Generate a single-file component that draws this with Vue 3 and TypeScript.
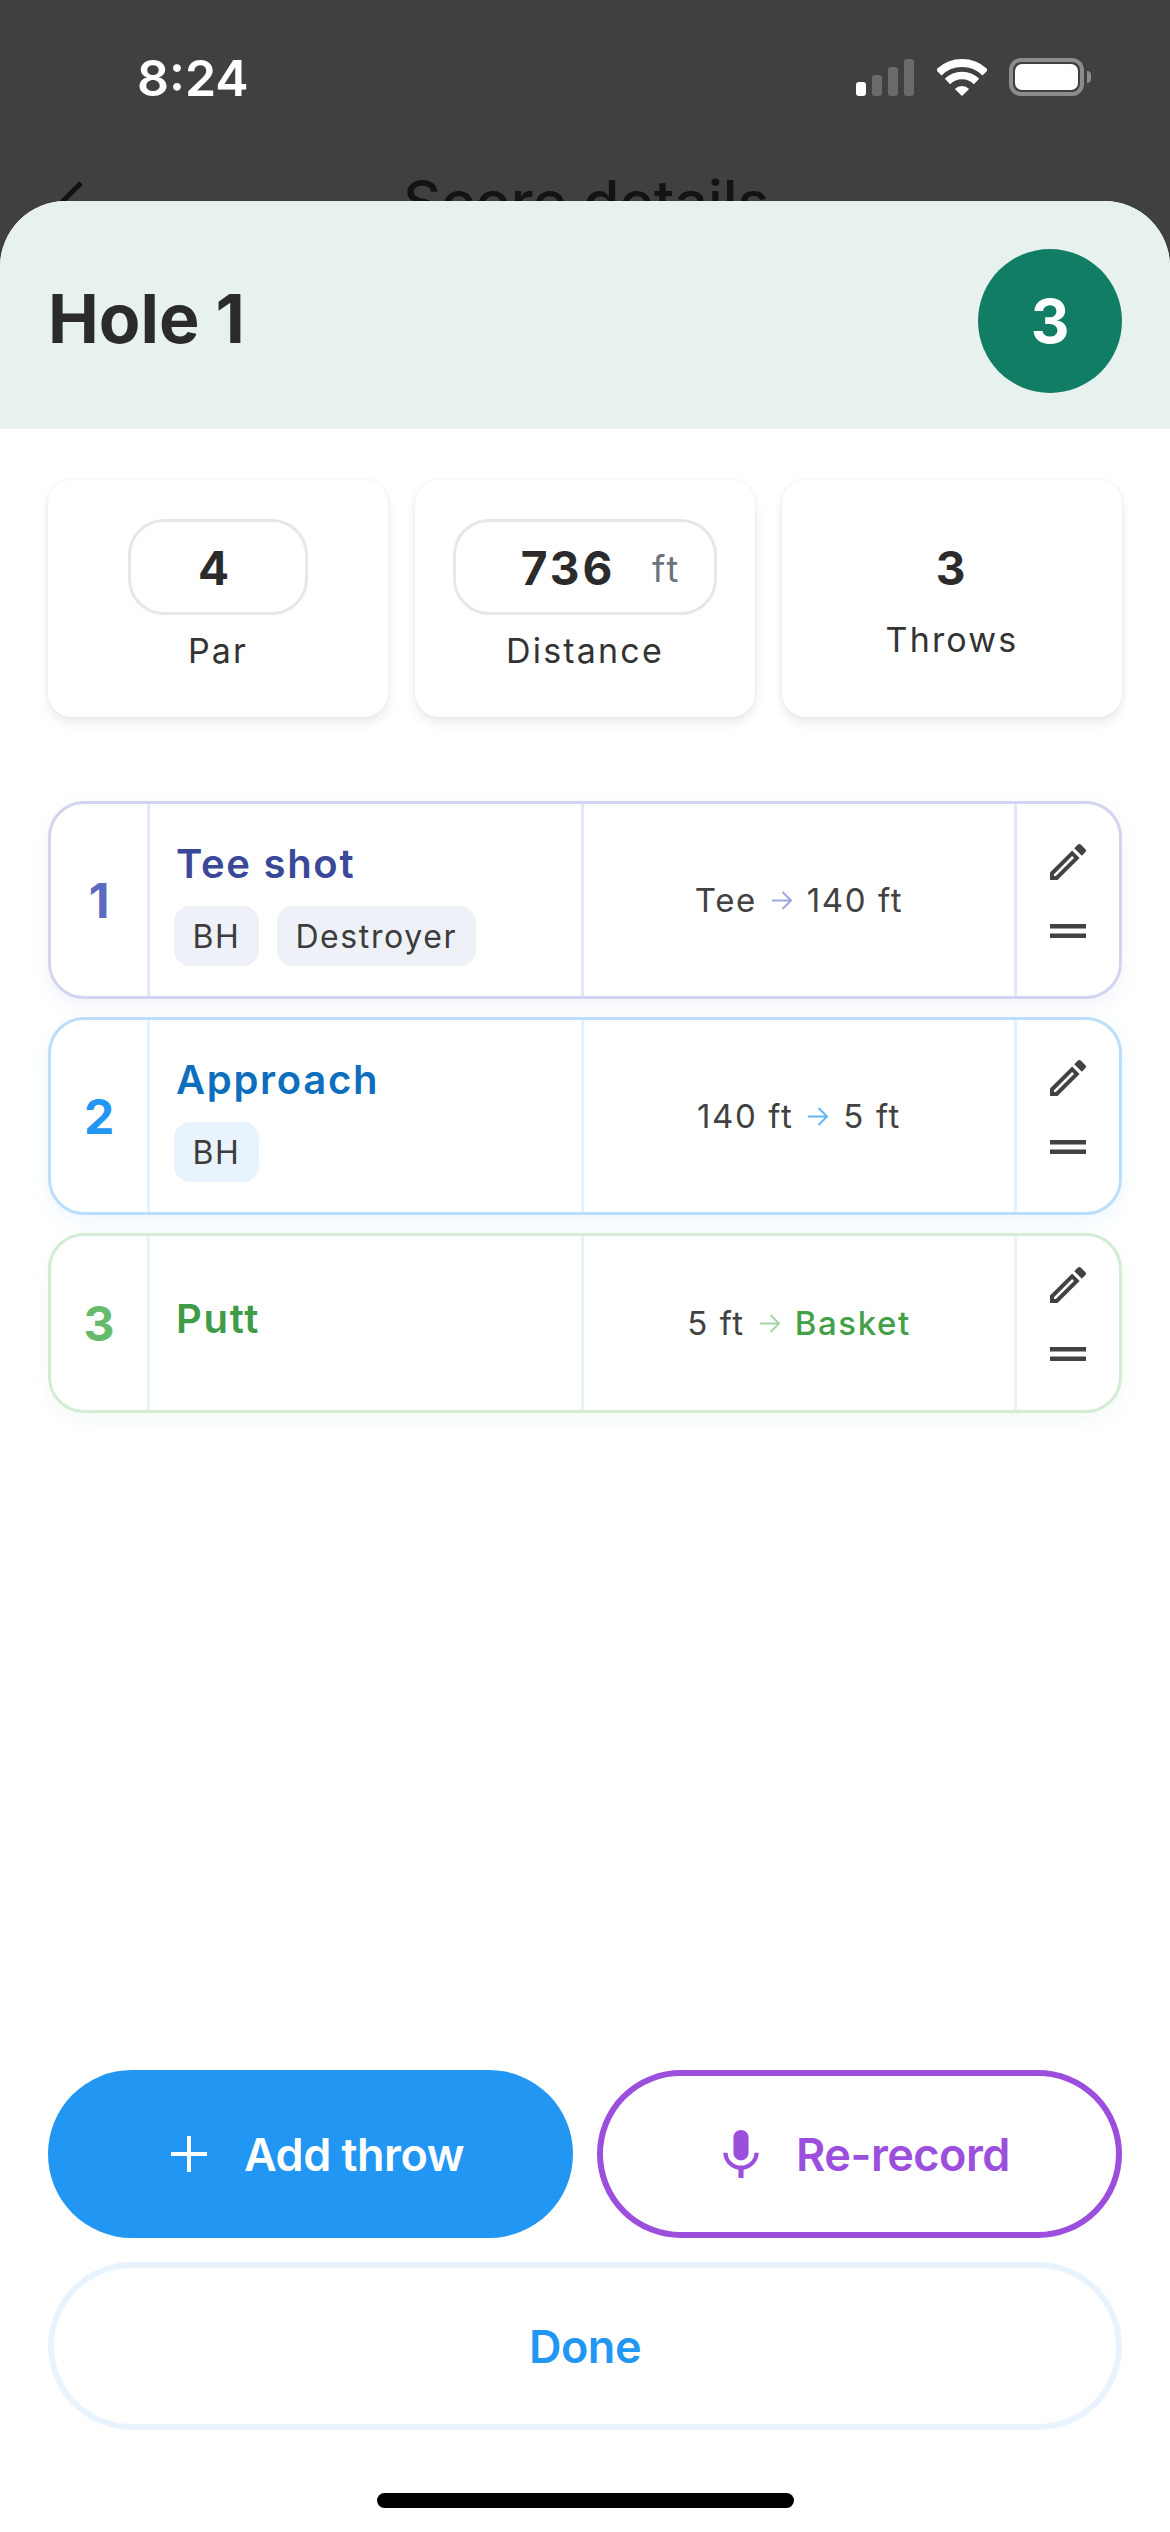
<template>
  <div class="phone">
    <div class="status">
      <span class="time">8:24</span>
      <div class="status-icons">
        <div class="signal">
          <i class="bar on b1"></i>
          <i class="bar b2"></i>
          <i class="bar b3"></i>
          <i class="bar b4"></i>
        </div>
        <svg class="wifi" width="50" height="37" viewBox="0 0 50 37">
          <path d="M1.7 13.7A33 33 0 0 1 48.3 13.7" fill="none" stroke="#fff" stroke-width="8" />
          <path d="M10.5 22.5A20.5 20.5 0 0 1 39.5 22.5" fill="none" stroke="#fff" stroke-width="7.5" />
          <path d="M25 37L17.9 29.9A10 10 0 0 1 32.1 29.9Z" fill="#fff" />
        </svg>
        <div class="battery"><div class="charge"></div></div>
        <div class="nub"></div>
      </div>
    </div>

    <div class="nav">
      <svg class="back" width="30" height="48" viewBox="0 0 30 48">
        <path d="M26 3L5 24L26 45" fill="none" stroke="#111" stroke-width="5" />
      </svg>
      <span class="nav-title">Score details</span>
    </div>

    <div class="sheet">
      <div class="sheet-head">
        <div class="hole">Hole 1</div>
        <div class="score">3</div>
      </div>

      <div class="stats">
        <div class="stat">
          <div class="pill">
            <span class="value par">4</span>
          </div>
          <div class="label">Par</div>
        </div>
        <div class="stat">
          <div class="pill wide">
            <span class="value dist">736</span>
            <span class="unit">ft</span>
          </div>
          <div class="label">Distance</div>
        </div>
        <div class="stat plain">
          <div class="value">3</div>
          <div class="label near">Throws</div>
        </div>
      </div>

      <div class="throws">
        <div v-for="t in throwsList" :key="t.num" class="throw" :class="t.kind">
          <div class="num">{{ t.num }}</div>
          <div class="main" :class="{ bare: !t.tags.length }">
            <div class="name">{{ t.name }}</div>
            <div v-if="t.tags.length" class="tags">
              <span v-for="tag in t.tags" :key="tag" class="tag">{{ tag }}</span>
            </div>
          </div>
          <div class="range">
            <span>{{ t.from }}</span>
            <svg class="arrow" width="20" height="19" viewBox="0 0 20 19">
              <path d="M0 9.5H19M10.5 1L19 9.5L10.5 18" fill="none" stroke-width="2" />
            </svg>
            <span :class="{ basket: t.to === 'Basket' }">{{ t.to }}</span>
          </div>
          <div class="tools">
            <svg width="36" height="36" viewBox="3 3 18 18">
              <path fill="#424242" d="M3 17.25V21h3.75L17.81 9.94l-3.75-3.75L3 17.25zM5.92 19H5v-.92l9.06-9.06.92.92L5.92 19zM20.71 5.63l-2.34-2.34c-.2-.2-.45-.29-.71-.29s-.51.1-.7.29l-1.83 1.83 3.75 3.75 1.83-1.83c.39-.39.39-1.02 0-1.41z" />
            </svg>
            <svg width="36" height="14" viewBox="0 0 36 14">
              <path fill="#424242" d="M0 0h36v4.5H0zM0 9.5h36V14H0z" />
            </svg>
          </div>
        </div>
      </div>

      <div class="actions">
        <div class="action-row">
          <button class="btn add">
            <svg width="36" height="36" viewBox="0 0 36 36">
              <path d="M18 0V36M0 18H36" stroke="#fff" stroke-width="4" fill="none" />
            </svg>
            Add throw
          </button>
          <button class="btn record">
            <svg width="36" height="48" viewBox="5 2 14 19">
              <path fill="#9c4fdc" d="M12 14c1.66 0 2.99-1.34 2.99-3L15 5c0-1.66-1.34-3-3-3S9 3.34 9 5v6c0 1.66 1.34 3 3 3zm5.3-3c0 3-2.54 5.1-5.3 5.1S6.7 14 6.7 11H5c0 3.41 2.72 6.23 6 6.72V21h2v-3.28c3.28-.48 6-3.3 6-6.72h-1.7z" />
            </svg>
            Re-record
          </button>
        </div>
        <button class="btn done">Done</button>
      </div>

      <div class="home-bar"></div>
    </div>
  </div>
</template>

<script setup lang="ts">
interface ThrowRow {
  num: number
  kind: string
  name: string
  tags: string[]
  from: string
  to: string
}

const throwsList: ThrowRow[] = [
  { num: 1, kind: 'tee', name: 'Tee shot', tags: ['BH', 'Destroyer'], from: 'Tee', to: '140 ft' },
  { num: 2, kind: 'approach', name: 'Approach', tags: ['BH'], from: '140 ft', to: '5 ft' },
  { num: 3, kind: 'putt', name: 'Putt', tags: [], from: '5 ft', to: 'Basket' },
]
</script>

<style scoped>
.phone {
  width: 1170px;
  height: 2532px;
  display: flex;
  flex-direction: column;
  background: #404040;
  font-family: Inter, "Liberation Sans", sans-serif;
  overflow: hidden;
}

.status {
  height: 130px;
  padding: 0 79px 0 137px;
  display: flex;
  align-items: flex-start;
  justify-content: space-between;
}

.time {
  margin-top: 48px;
  font-size: 50px;
  line-height: 60px;
  font-weight: 600;
  color: #fff;
}

.status-icons {
  margin-top: 58px;
  display: flex;
  align-items: flex-end;
}

.signal {
  display: flex;
  align-items: flex-end;
  gap: 6px;
  height: 38px;
}

.bar {
  width: 10px;
  border-radius: 3px;
  background: #6a6a6a;
}

.bar.on { background: #fff; }
.b1 { height: 14px; }
.b2 { height: 21px; }
.b3 { height: 29px; }
.b4 { height: 37px; }

.wifi {
  margin-left: 23px;
}

.battery {
  margin-left: 22px;
  width: 75px;
  height: 38px;
  box-sizing: border-box;
  border: 4px solid #8c8c8c;
  border-radius: 12px;
  padding: 2px;
}

.charge {
  height: 100%;
  border-radius: 7px;
  background: #fff;
}

.nub {
  width: 4px;
  height: 12px;
  margin: 0 0 13px 3px;
  border-radius: 0 6px 6px 0;
  background: #8c8c8c;
}

.nav {
  height: 71px;
  flex: none;
  display: flex;
  align-items: flex-start;
  overflow: hidden;
}

.back {
  margin: 50px 0 0 55px;
}

.nav-title {
  margin: 40px 0 0 318px;
  font-size: 59px;
  line-height: 64px;
  font-weight: 500;
  color: #131313;
  white-space: nowrap;
}

.sheet {
  flex: 1;
  display: flex;
  flex-direction: column;
  background: #fff;
  border-radius: 66px 66px 0 0;
  overflow: hidden;
}

.sheet-head {
  height: 228px;
  flex: none;
  box-sizing: border-box;
  padding: 12px 48px 0;
  display: flex;
  align-items: center;
  justify-content: space-between;
  background: #e7f1ed;
}

.hole {
  padding-bottom: 6px;
  font-size: 68px;
  font-weight: 700;
  color: #2b2b2b;
}

.score {
  width: 144px;
  height: 144px;
  border-radius: 50%;
  display: flex;
  align-items: center;
  justify-content: center;
  background: #127d65;
  color: #fff;
  font-size: 60px;
  font-weight: 700;
}

.stats {
  margin: 51px 48px 0;
  display: grid;
  grid-template-columns: repeat(3, 1fr);
  gap: 27px;
}

.stat {
  height: 237px;
  box-sizing: border-box;
  padding-top: 39px;
  display: flex;
  flex-direction: column;
  align-items: center;
  background: #fff;
  border-radius: 24px;
  box-shadow: 0 6px 12px rgba(0, 0, 0, 0.08), 0 0 5px rgba(0, 0, 0, 0.05);
}

.stat.plain {
  padding-top: 58px;
}

.pill {
  width: 180px;
  height: 96px;
  box-sizing: border-box;
  border: 3px solid #e6e7ec;
  border-radius: 36px;
  display: flex;
  align-items: center;
  justify-content: center;
}

.pill.wide {
  width: 264px;
  justify-content: flex-start;
  padding-left: 30px;
}

.value {
  font-size: 46px;
  line-height: 60px;
  font-weight: 700;
  letter-spacing: 3px;
  color: #2b2b2b;
  text-align: center;
}

.value.par {
  margin: 2px 6px 0 0;
}

.value.dist {
  width: 164px;
  margin-top: 2px;
}

.unit {
  margin: 3px 0 0 2px;
  font-size: 36px;
  letter-spacing: 2.5px;
  color: #6b7280;
}

.label {
  margin-top: 16px;
  font-size: 34px;
  line-height: 40px;
  letter-spacing: 2.2px;
  color: #333;
}

.label.near {
  margin-top: 22px;
}

.throws {
  margin: 84px 48px 0;
  display: flex;
  flex-direction: column;
  gap: 18px;
}

.throw {
  --line: #d1d5ef;
  --cell: #e4e7f7;
  display: grid;
  grid-template-columns: 99px 434px 433px 1fr;
  min-height: 180px;
  box-sizing: border-box;
  border: 3px solid var(--line);
  border-radius: 36px;
  background: #fff;
  box-shadow: 0 6px 18px var(--glow);
}

.throw.tee { --glow: rgba(92, 107, 192, 0.08); }

.throw.approach {
  --line: #bbdefb;
  --cell: #e3f2fd;
  --glow: rgba(33, 150, 243, 0.08);
}

.throw.putt {
  --line: #d3ecd5;
  --cell: #e8f5e9;
  --glow: rgba(102, 187, 106, 0.08);
}

.num,
.main,
.range {
  border-right: 3px solid var(--cell);
}

.num {
  display: flex;
  align-items: center;
  justify-content: center;
  font-size: 48px;
  font-weight: 700;
}

.tee .num { color: #5c6bc0; }
.approach .num { color: #2196f3; }
.putt .num { color: #66bb6a; }

.main {
  display: flex;
  flex-direction: column;
  justify-content: center;
  padding: 36px 0 30px 24px;
}

.main.bare {
  padding: 28px 0 36px 24px;
}

.name {
  padding-left: 2px;
  font-size: 40px;
  line-height: 48px;
  font-weight: 600;
  letter-spacing: 1.7px;
}

.tee .name { color: #3b4899; }
.approach .name { color: #0d6ebd; }
.putt .name { color: #3f9b48; }

.tags {
  margin-top: 18px;
  display: flex;
  gap: 18px;
}

.tag {
  height: 60px;
  padding: 0 18.5px;
  display: flex;
  align-items: center;
  border-radius: 16px;
  font-size: 32px;
  letter-spacing: 1.6px;
  color: #3c3c3c;
}

.tee .tag { background: #eef1f8; }
.approach .tag { background: #e8f3fe; }

.range {
  display: flex;
  align-items: center;
  justify-content: center;
  gap: 15px;
  font-size: 33px;
  letter-spacing: 1.6px;
  color: #424242;
}

.arrow { stroke: #9fa8da; }
.approach .arrow { stroke: #64b5f6; }
.putt .arrow { stroke: #a5d6a7; }

.basket {
  color: #43a047;
  font-weight: 500;
}

.tools {
  display: flex;
  flex-direction: column;
  align-items: center;
  justify-content: center;
  gap: 44px;
  padding-bottom: 19px;
}

.actions {
  margin: auto 48px 0;
  display: flex;
  flex-direction: column;
  gap: 24px;
}

.action-row {
  display: grid;
  grid-template-columns: 1fr 1fr;
  gap: 24px;
}

.btn {
  height: 168px;
  box-sizing: border-box;
  border-radius: 84px;
  display: flex;
  align-items: center;
  justify-content: center;
  gap: 37px;
  font-family: inherit;
  font-size: 45px;
  font-weight: 600;
  letter-spacing: -0.5px;
  cursor: pointer;
}

.btn.add {
  padding-left: 20px;
  border: none;
  background: #2196f3;
  color: #fff;
}

.btn.record {
  padding-left: 20px;
  border: 6px solid #9c4fdc;
  background: #fff;
  color: #9c4fdc;
}

.btn.done {
  width: 100%;
  border: 6px solid #e8f3fe;
  background: #fff;
  color: #2196f3;
}

.home-bar {
  width: 417px;
  height: 15px;
  margin: 63px auto 24px;
  flex: none;
  border-radius: 8px;
  background: #000;
}
</style>
